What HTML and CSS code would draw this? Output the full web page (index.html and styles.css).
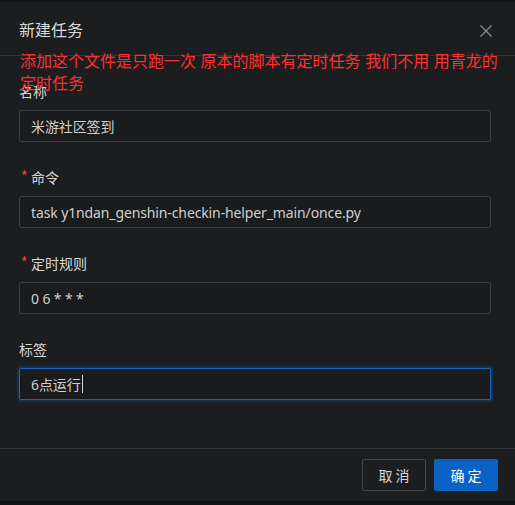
FILE: index.html
```html
<!DOCTYPE html>
<html lang="zh-CN">
<head>
<meta charset="utf-8">
<title>新建任务</title>
<link rel="stylesheet" href="styles.css">
</head>
<body>
<div class="modal">
  <div class="modal-header">
    <span class="modal-title">新建任务</span>
    <span class="modal-close">
      <svg width="12" height="12" viewBox="0 0 12 12"><path d="M0.5 0.5 L11.5 11.5 M11.5 0.5 L0.5 11.5" stroke="#8c8c8c" stroke-width="1.3" fill="none"/></svg>
    </span>
  </div>
  <p class="note">添加这个文件是只跑一次 原本的脚本有定时任务 我们不用 用青龙的 定时任务</p>
  <div class="modal-body">
    <div class="form-item">
      <div class="label">名称</div>
      <div class="input">米游社区签到</div>
    </div>
    <div class="form-item">
      <div class="label"><span class="req">*</span>命令</div>
      <div class="input">task y1ndan_genshin-checkin-helper_main/once.py</div>
    </div>
    <div class="form-item">
      <div class="label"><span class="req">*</span>定时规则</div>
      <div class="input">0 6 * * *</div>
    </div>
    <div class="form-item">
      <div class="label">标签</div>
      <div class="input focused">6点运行<span class="caret"></span></div>
    </div>
  </div>
  <div class="modal-footer">
    <button class="btn">取 消</button>
    <button class="btn primary">确 定</button>
  </div>
</div>
</body>
</html>
```
FILE: styles.css
```css
html, body {
  margin: 0;
  padding: 0;
  background: #101112;
  font-family: "Segoe UI", "Noto Sans", "Noto Sans CJK SC", sans-serif;
}
.modal {
  position: relative;
  margin-top: 2px;
  width: 515px;
  background: #1c1d1f;
  color: #d6d6d6;
}
.modal-header {
  height: 54px;
  box-sizing: border-box;
  padding: 16px 23px 16px 19px;
  border-bottom: 1px solid #343536;
  display: flex;
  align-items: center;
  justify-content: space-between;
}
.modal-title {
  font-size: 16px;
  line-height: 22px;
  color: #d8d8d8;
  font-family: "Noto Sans CJK SC", sans-serif;
}
.modal-close {
  display: flex;
  width: 12px;
  height: 12px;
  margin-top: 4px;
}
.note {
  position: absolute;
  left: 20px;
  top: 47px;
  width: 490px;
  margin: 0;
  font-size: 16px;
  line-height: 22px;
  color: #ff2f2f;
  word-spacing: 1px;
  font-family: "Noto Sans CJK SC", sans-serif;
}
.modal-body {
  padding: 24px 24px 24px 19px;
}
.form-item {
  margin-bottom: 24px;
}
.label {
  height: 22px;
  line-height: 22px;
  padding-bottom: 8px;
  font-size: 14px;
  color: #d6d6d6;
  font-family: "Noto Sans CJK SC", sans-serif;
  display: flex;
  align-items: center;
}
.req {
  color: #ff4d4f;
  font-family: "Liberation Mono", monospace;
  font-size: 14px;
  margin-right: 4px;
  width: 7px;
  margin-left: 1px;
}
.input {
  height: 32px;
  box-sizing: border-box;
  border: 1px solid #3c3d3e;
  border-radius: 2px;
  padding: 0 11px;
  display: flex;
  align-items: center;
  font-size: 14px;
  letter-spacing: -0.12px;
  color: #cfcfcf;
  background: #1a1b1d;
  font-family: "Segoe UI", "Noto Sans", "Noto Sans CJK SC", sans-serif;
}
.input.focused {
  border-color: #1a64bd;
  box-shadow: 0 0 0 2px rgba(23, 101, 193, 0.25);
}
.caret {
  display: inline-block;
  width: 1px;
  height: 18px;
  background: #d0d0d0;
  margin-left: 1px;
}
.modal-footer {
  border-top: 1px solid #343536;
  padding: 10px 17px 10px 0;
  display: flex;
  justify-content: flex-end;
  gap: 8px;
}
.btn {
  width: 64px;
  height: 32px;
  border: 1px solid #434445;
  border-radius: 2px;
  background: transparent;
  color: #d6d6d6;
  font-size: 14px;
  font-family: "Noto Sans CJK SC", sans-serif;
  padding: 0;
}
.btn.primary {
  background: #0a62c4;
  border-color: #0a62c4;
  color: #ffffff;
}
```
